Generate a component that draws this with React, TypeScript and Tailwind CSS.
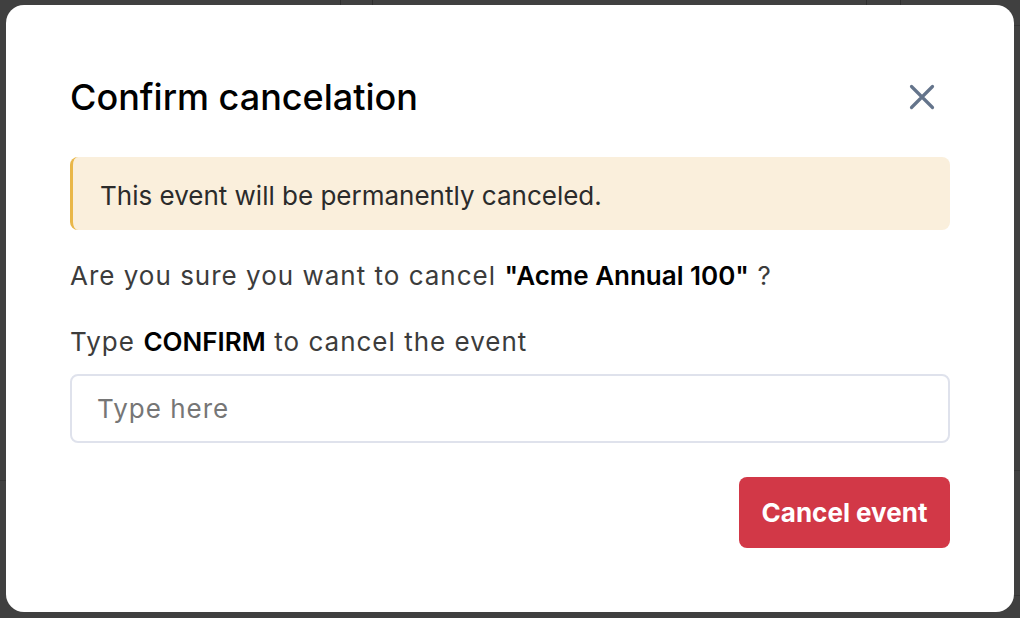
export default function App() {
  return (
    <div
      className="relative h-[618px] w-[1020px] overflow-hidden bg-[#404040] pt-[5px] pl-[6px] pr-[6px]"
      style={{ fontFamily: 'Inter, "Noto Sans", sans-serif' }}
    >
      {/* dimmed page behind the dialog */}
      <div className="absolute left-[340px] top-0 h-[5px] w-px bg-[#2f2f2f]" />
      <div className="absolute left-[372px] top-0 h-[5px] w-px bg-[#2f2f2f]" />
      <div className="absolute left-[866px] top-0 h-[5px] w-px bg-[#2f2f2f]" />
      <div className="absolute left-[900px] top-0 h-[5px] w-px bg-[#2f2f2f]" />
      <div className="absolute right-0 top-[25px] h-px w-[6px] bg-[#353535]" />
      <div className="absolute left-0 top-[480px] h-px w-[6px] bg-[#353535]" />
      <div className="absolute right-0 top-[470px] h-px w-[6px] bg-[#353535]" />
      <div className="absolute right-0 top-[595px] h-px w-[6px] bg-[#353535]" />

      <div className="flex h-[607px] flex-col rounded-[18px] bg-white px-[64px] pt-[66px]">
        <div className="flex h-[52px] items-center justify-between">
          <h2 className="text-[36px] font-medium leading-none text-black">
            Confirm cancelation
          </h2>
          <button className="mr-[15px] flex h-[26px] w-[26px] items-center justify-center text-[#64748b]">
            <svg width="26" height="26" viewBox="0 0 26 26" fill="none">
              <path
                d="M2.5 2.5 L23.5 23.5 M23.5 2.5 L2.5 23.5"
                stroke="currentColor"
                strokeWidth="3.2"
                strokeLinecap="round"
              />
            </svg>
          </button>
        </div>

        <div className="mt-[34px] flex h-[73px] items-center rounded-[8px] border-l-[3px] border-[#e9b749] bg-[#faefdc] pl-[27px] pt-[4px] text-[26px] text-[#2b2b2b]">
          This event will be permanently canceled.
        </div>

        <p className="mt-[30px] h-[32px] text-[26px] leading-[32px] tracking-[1px] text-[#3c3c3c]">
          Are you sure you want to cancel
          <span className="mx-[2px] font-semibold tracking-normal text-black"> "Acme Annual 100" </span>?
        </p>

        <p className="mt-[34px] h-[32px] text-[26px] leading-[32px] tracking-[1px] text-[#3c3c3c]">
          Type
          <span className="mx-[2px] font-semibold tracking-normal text-black"> CONFIRM </span>
          to cancel the event
        </p>

        <input
          placeholder="Type here"
          className="mt-[16px] h-[69px] w-full rounded-[8px] border-2 border-[#dfe2ec] px-[25px] text-[26px] tracking-[1px] text-black outline-none placeholder:text-[#767676]"
        />

        <div className="mt-[34px] flex justify-end">
          <button className="h-[71px] w-[211px] rounded-[8px] bg-[#d23847] text-[26px] font-bold text-white">
            Cancel event
          </button>
        </div>
      </div>
    </div>
  );
}
